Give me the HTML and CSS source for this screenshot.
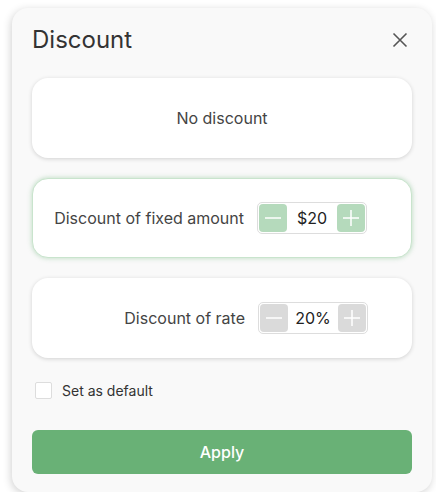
FILE: index.html
```html
<!DOCTYPE html>
<html>
<head>
    <title>Discount</title>
    <link rel="stylesheet" href="styles.css">
</head>
<body>
    <div class="panel">
        <div class="header">
            <h1>Discount</h1>
            <button class="close" aria-label="Close">
                <svg width="16" height="16" viewBox="0 0 16 16">
                    <path d="M1.5 1.5 L14.5 14.5 M14.5 1.5 L1.5 14.5" stroke="#555" stroke-width="1.6" fill="none"/>
                </svg>
            </button>
        </div>

        <div class="option option-plain">No discount</div>

        <div class="option option-active">
            <span class="label">Discount of fixed amount</span>
            <div class="stepper green">
                <button class="step" aria-label="Decrease">
                    <svg width="28" height="28" viewBox="0 0 28 28"><path d="M6 14 H22" stroke="#fff" stroke-width="1.5"/></svg>
                </button>
                <span class="value">$20</span>
                <button class="step" aria-label="Increase">
                    <svg width="28" height="28" viewBox="0 0 28 28"><path d="M6 14 H22 M14 6 V22" stroke="#fff" stroke-width="1.5"/></svg>
                </button>
            </div>
        </div>

        <div class="option">
            <span class="label">Discount of rate</span>
            <div class="stepper gray">
                <button class="step" aria-label="Decrease">
                    <svg width="28" height="28" viewBox="0 0 28 28"><path d="M6 14 H22" stroke="#fff" stroke-width="1.5"/></svg>
                </button>
                <span class="value">20%</span>
                <button class="step" aria-label="Increase">
                    <svg width="28" height="28" viewBox="0 0 28 28"><path d="M6 14 H22 M14 6 V22" stroke="#fff" stroke-width="1.5"/></svg>
                </button>
            </div>
        </div>

        <label class="default-row">
            <span class="checkbox"></span>
            Set as default
        </label>

        <button class="apply">Apply</button>
    </div>
</body>
</html>
```

FILE: styles.css
```css
body {
    font-family: Inter, 'Noto Sans', sans-serif;
    margin: 0;
    background: #fff;
}
.panel {
    margin: 8px 0 0 12px;
    width: 420px;
    box-sizing: border-box;
    background: #f9f9f9;
    border-radius: 16px;
    box-shadow: -1px 2px 8px rgba(0,0,0,0.18);
    padding: 16px 20px 18px;
}
.header {
    display: flex;
    justify-content: space-between;
    align-items: center;
    height: 32px;
    margin-bottom: 22px;
}
h1 {
    margin: 0;
    font-size: 24px;
    font-weight: 400;
    color: #333;
    line-height: 32px;
}
.close {
    border: none;
    background: none;
    padding: 0;
    margin-right: 4px;
    width: 16px;
    height: 16px;
    display: flex;
}
.option {
    height: 80px;
    box-sizing: border-box;
    background: #fff;
    border-radius: 16px;
    box-shadow: 0 1px 4px rgba(0,0,0,0.16);
    margin-bottom: 20px;
    display: grid;
    grid-template-columns: 1fr 110px;
    column-gap: 13px;
    align-items: center;
    padding-right: 44px;
    font-size: 16px;
    color: #444;
}
.option .label {
    text-align: right;
}
.option-plain {
    display: flex;
    justify-content: center;
    padding-right: 0;
}
.option-active {
    border: 1px solid #c9e4cd;
    box-shadow: 0 0 5px rgba(105,177,118,0.45);
}
.stepper {
    height: 32px;
    box-sizing: border-box;
    border: 1px solid #ddd;
    border-radius: 5px;
    padding: 1px;
    display: flex;
    align-items: center;
    justify-content: space-between;
}
.step {
    width: 28px;
    height: 28px;
    border: none;
    border-radius: 4px;
    padding: 0;
    display: flex;
}
.green .step {
    background: #b5dabc;
}
.gray .step {
    background: #dadada;
}
.value {
    flex: 1;
    text-align: center;
    color: #222;
    font-size: 16px;
}
.default-row {
    display: flex;
    align-items: center;
    gap: 10px;
    height: 20px;
    margin: 22px 0 30px 3px;
    font-size: 14px;
    color: #333;
}
.checkbox {
    width: 17px;
    height: 17px;
    box-sizing: border-box;
    background: #fff;
    border: 1px solid #ddd;
    border-radius: 2px;
}
.apply {
    display: block;
    width: 100%;
    height: 44px;
    border: none;
    border-radius: 6px;
    background: #69b176;
    color: #fff;
    font-family: Inter, 'Noto Sans', sans-serif;
    font-size: 16px;
    font-weight: 500;
}
```
